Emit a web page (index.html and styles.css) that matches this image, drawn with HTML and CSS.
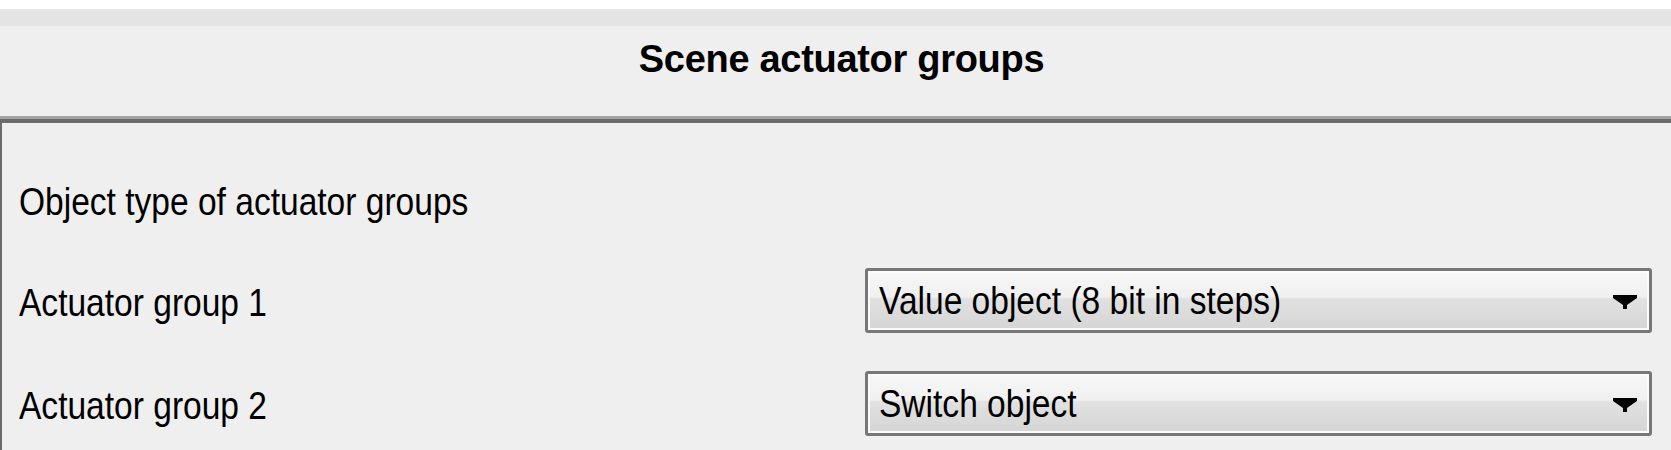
FILE: index.html
```html
<!DOCTYPE html>
<html lang="en">
<head>
<meta charset="utf-8">
<title>Scene actuator groups</title>
<link rel="stylesheet" href="styles.css">
</head>
<body>
<div class="window">
  <div class="top-band"></div>
  <div class="header">
    <h1 class="title">Scene actuator groups</h1>
  </div>
  <div class="panel">
    <div class="row row-heading">
      <div class="label"><span class="text">Object type of actuator groups</span></div>
    </div>
    <div class="row">
      <div class="label"><span class="text">Actuator group 1</span></div>
      <div class="select">
        <span class="value">Value object (8 bit in steps)</span>
        <svg class="arrow" width="24" height="14" viewBox="0 0 24 14"><polygon points="0,0 24,0 24,3 14,10 14,14 10,14 10,10 0,3" fill="#000"/></svg>
      </div>
    </div>
    <div class="row">
      <div class="label"><span class="text">Actuator group 2</span></div>
      <div class="select">
        <span class="value">Switch object</span>
        <svg class="arrow" width="24" height="14" viewBox="0 0 24 14"><polygon points="0,0 24,0 24,3 14,10 14,14 10,14 10,10 0,3" fill="#000"/></svg>
      </div>
    </div>
  </div>
</div>
</body>
</html>
```
FILE: styles.css
```css
html, body {
  margin: 0;
  padding: 0;
  background: #efefef;
}

.window {
  width: 1671px;
  height: 450px;
  background: #efefef;
  overflow: hidden;
  display: flex;
  flex-direction: column;
}

.top-band {
  height: 9px;
  background: #ffffff;
  border-bottom: 17px solid #e4e4e4;
}

.header {
  height: 93px;
  background: #efefef;
  border-bottom: 3px solid #a3a3a3;
  box-sizing: border-box;
  padding-top: 13px;
}

.title {
  margin: 0;
  text-align: center;
  padding-left: 12px;
  font-family: "Liberation Sans", Arial, sans-serif;
  font-weight: bold;
  font-size: 38px;
  letter-spacing: -0.3px;
  line-height: 41px;
  color: #000;
}

.panel {
  flex: 1;
  border-top: 4px solid #6b6b6b;
  border-left: 2px solid #6b6b6b;
  padding: 42px 19px 0 17px;
  display: grid;
  grid-template-columns: 1fr 787px;
  grid-auto-rows: 65px;
  row-gap: 38px;
  align-content: start;
  font-family: "Liberation Sans", Arial, sans-serif;
  font-size: 39px;
  color: #000;
}

.row {
  display: contents;
}

.label {
  display: flex;
  align-items: center;
  white-space: nowrap;
  padding-top: 4px;
}

.label .text,
.value {
  display: inline-block;
  white-space: nowrap;
  transform: scaleX(0.86);
  transform-origin: left center;
}

.row-heading .label {
  grid-column: 1 / -1;
  padding-top: 9px;
}

.select {
  display: flex;
  align-items: center;
  justify-content: space-between;
  box-sizing: border-box;
  height: 65px;
  border: 3px solid #777777;
  border-radius: 3px;
  box-shadow: inset 0 0 0 2px #fbfbfb;
  background: linear-gradient(to bottom, #f7f7f7 0%, #f0f0f0 44%, #e1e1e1 47%, #d5d5d5 100%);
  padding: 0 12px 0 11px;
}

.arrow {
  flex: none;
  display: block;
  margin-top: 2px;
}
```
